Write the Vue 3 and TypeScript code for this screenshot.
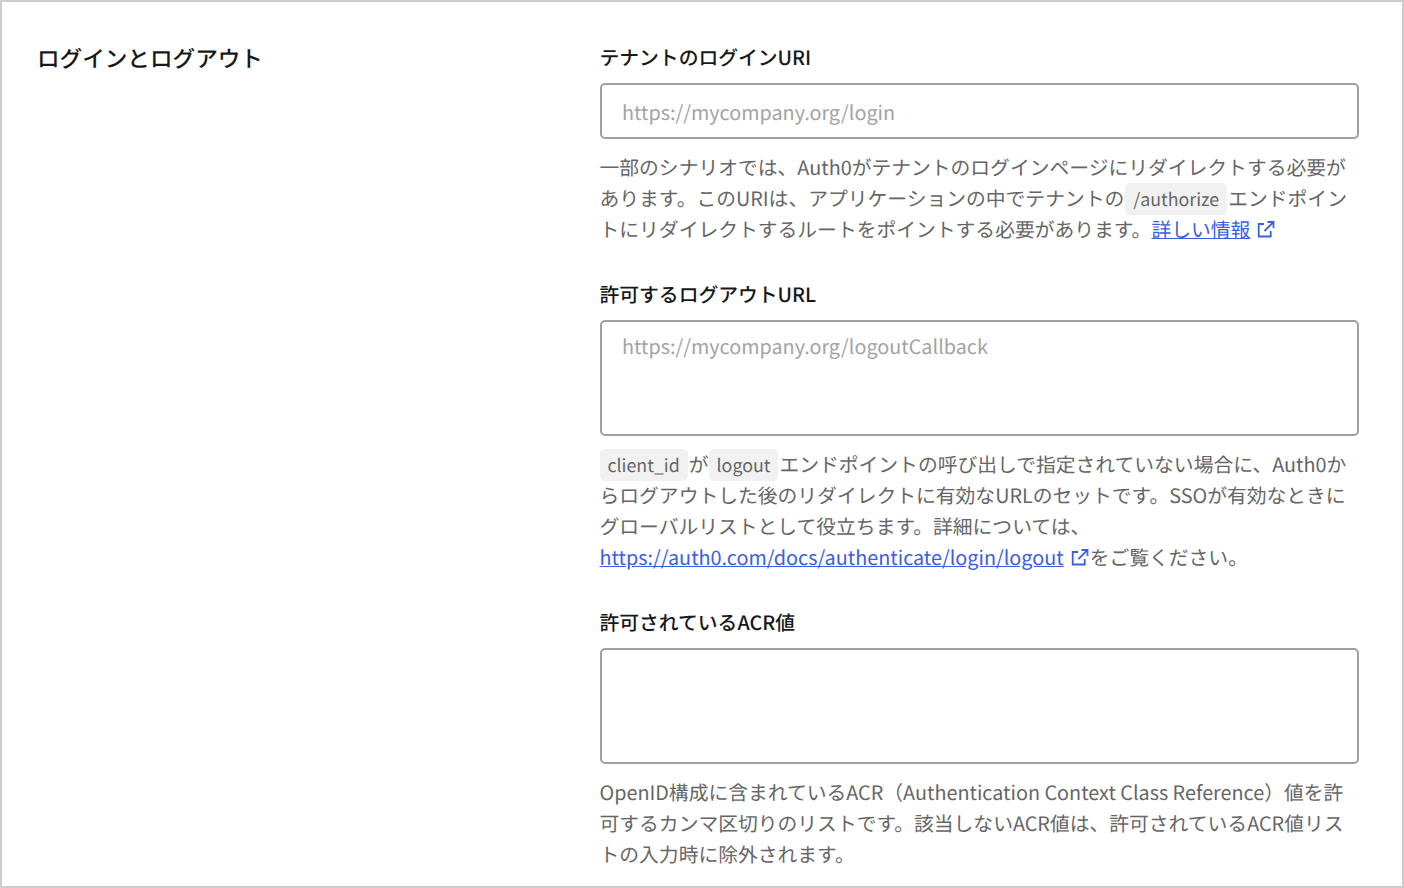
<script setup lang="ts">
const box = "M8 5H2.7v12.5h12V12";
const arrow = "M11.5 3h6v6M17.3 3.2 8.5 12";
</script>

<template>
  <div class="page">
    <h2 class="title">ログインとログアウト</h2>
    <div class="form">
      <section class="field">
        <label class="label">テナントのログインURI</label>
        <input class="control single" placeholder="https://mycompany.org/login" />
        <p class="help">
          一部のシナリオでは、Auth0がテナントのログインページにリダイレクトする必要があります。このURIは、アプリケーションの中でテナントの<code>/authorize</code>エンドポイントにリダイレクトするルートをポイントする必要があります。<a href="#">詳しい情報</a><svg class="ext" viewBox="0 0 20 20"><path :d="box" /><path :d="arrow" /></svg>
        </p>
      </section>
      <section class="field">
        <label class="label">許可するログアウトURL</label>
        <textarea class="control multi" placeholder="https://mycompany.org/logoutCallback"></textarea>
        <p class="help">
          <code class="first">client_id</code>が<code class="second">logout</code>エンドポイントの呼び出しで指定されていない場合に、Auth0からログアウトした後のリダイレクトに有効なURLのセットです。SSOが有効なときにグローバルリストとして役立ちます。詳細については、<br /><a href="#">https://auth0.com/docs/authenticate/login/logout</a><svg class="ext tight" viewBox="0 0 20 20"><path :d="box" /><path :d="arrow" /></svg>をご覧ください。
        </p>
      </section>
      <section class="field">
        <label class="label">許可されているACR値</label>
        <textarea class="control multi"></textarea>
        <p class="help">
          OpenID構成に含まれているACR（Authentication Context Class Reference）値を許可するカンマ区切りのリストです。該当しないACR値は、許可されているACR値リストの入力時に除外されます。
        </p>
      </section>
    </div>
  </div>
</template>

<style>
html, body { margin: 0; background: #fff; }
</style>

<style scoped>
.page {
  box-sizing: border-box;
  width: 1404px;
  height: 888px;
  overflow: hidden;
  border: 2px solid #ccc;
  padding: 0 43.5px 0 35px;
  display: grid;
  grid-template-columns: 562.5px 1fr;
  font-family: "Noto Sans CJK JP", "Noto Sans", sans-serif;
  color: #191919;
  text-rendering: geometricPrecision;
}
.title {
  margin: 39px 0 0;
  font-size: 22.6px;
  line-height: 34px;
  font-weight: 500;
}
.form { padding-top: 40px; }
.field { margin-bottom: 35px; }
.label {
  display: block;
  font-size: 19.8px;
  line-height: 30px;
  font-weight: 500;
  margin-bottom: 11px;
}
.control {
  display: block;
  box-sizing: border-box;
  width: 100%;
  border: 2px solid #a0a0a0;
  border-radius: 5px;
  padding: 0 20.5px;
  margin: 0;
  background: #fff;
  font: 400 19.8px "Noto Sans CJK JP", "Noto Sans", sans-serif;
  color: #191919;
  outline: none;
  resize: none;
  text-rendering: geometricPrecision;
}
.control::placeholder { color: #a3a3a3; opacity: 1; }
.single { height: 56px; }
.multi { height: 116px; padding-top: 9px; line-height: 30px; }
.help {
  margin: 12px 0 0;
  font-size: 19.8px;
  line-height: 31px;
  color: #666;
}
code {
  font: inherit;
  font-size: 17.8px;
  line-height: 1;
  background: #f1f1f1;
  border-radius: 5px;
  padding: 3px 8px;
  margin: 0 1px;
}
code.first { margin-left: 0; }
code.second { margin-left: 0; }
a { color: #3b5ee0; text-decoration: underline; }
.ext {
  width: 20px;
  height: 20px;
  margin: 0 3px 0 6px;
  vertical-align: -2px;
  fill: none;
  stroke: #3b5ee0;
  stroke-width: 1.8;
}
.ext.tight { margin-right: 0; }
</style>
